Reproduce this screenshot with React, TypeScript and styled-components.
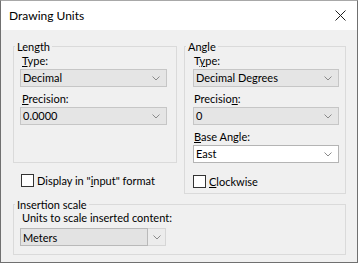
import React from "react";
import styled, { createGlobalStyle } from "styled-components";

const GlobalStyle = createGlobalStyle`
  html, body {
    margin: 0;
    padding: 0;
    background: #ffffff;
  }
  * { box-sizing: border-box; }
`;

const Window = styled.div`
  width: 358px;
  height: 263px;
  border: 1px solid #707070;
  border-top-color: #a8a8a8;
  background: #f0f0f0;
  display: flex;
  flex-direction: column;
  font-family: Lato, "Noto Sans", sans-serif;
  font-size: 11px;
  color: #000;
  overflow: hidden;
`;

const TitleBar = styled.div`
  height: 29px;
  flex: none;
  background: #ffffff;
  display: flex;
  align-items: center;
  justify-content: space-between;
  padding: 0 11px 0 8px;
`;

const Title = styled.span`
  font-size: 12px;
  line-height: 16px;
`;

const Body = styled.div`
  flex: 1;
  padding: 10px 11px 0 12px;
  display: grid;
  grid-template-columns: 164px 162px;
  column-gap: 7px;
  row-gap: 4px;
  align-content: start;
  align-items: start;
`;

const Column = styled.div`
  display: flex;
  flex-direction: column;
`;

const Group = styled.fieldset<{ $span?: boolean }>`
  margin: 0;
  padding: 0;
  min-width: 0;
  border: 1px solid #dadada;
  border-radius: 0;
  ${(p) => (p.$span ? "grid-column: 1 / -1;" : "")}
`;

const Legend = styled.legend`
  margin-left: 1px;
  padding: 0 2px;
  line-height: 13px;
`;

const GroupContent = styled.div<{ $pad: string }>`
  display: flex;
  flex-direction: column;
  padding: ${(p) => p.$pad};
`;

const Label = styled.div<{ $indent?: number; $gap?: number }>`
  line-height: 13px;
  padding-left: ${(p) => p.$indent ?? 2}px;
  margin-bottom: ${(p) => p.$gap ?? 2}px;
  white-space: nowrap;
`;

const Field = styled.div`
  display: flex;
  flex-direction: column;
  & + & { margin-top: 5px; }
`;

const Combo = styled.div<{ $white?: boolean }>`
  height: 18px;
  display: flex;
  align-items: center;
  justify-content: space-between;
  padding: 0 6px 0 2px;
  border: 1px solid ${(p) => (p.$white ? "#b4b4b4" : "#c6c6c6")};
  background: ${(p) => (p.$white ? "#ffffff" : "#e5e5e5")};
  line-height: 14px;
`;

const SplitCombo = styled.div`
  height: 18px;
  display: flex;
`;

const SplitField = styled.div`
  flex: 1;
  display: flex;
  align-items: center;
  padding-left: 2px;
  border: 1px solid #b9b9b9;
  background: #e3e3e3;
`;

const SplitButton = styled.div`
  width: 18px;
  display: flex;
  align-items: center;
  justify-content: center;
  border: 1px solid #d6d6d6;
  border-left: none;
  background: #ececec;
`;

const CheckRow = styled.label<{ $mt: number; $ml: number }>`
  display: flex;
  align-items: center;
  gap: 3px;
  margin-top: ${(p) => p.$mt}px;
  margin-left: ${(p) => p.$ml}px;
  line-height: 13px;
  white-space: nowrap;
`;

const Box = styled.span`
  width: 13px;
  height: 13px;
  flex: none;
  border: 1px solid #333333;
  background: #ffffff;
`;

const Chevron = () => (
  <svg width="8" height="5" viewBox="0 0 8 5">
    <path d="M0.5 0.5 L4 4 L7.5 0.5" fill="none" stroke="#8a8a8a" strokeWidth="1" />
  </svg>
);

const CloseIcon = () => (
  <svg width="11" height="11" viewBox="0 0 11 11">
    <path d="M0.5 0.5 L10.5 10.5 M10.5 0.5 L0.5 10.5" fill="none" stroke="#1e1e1e" strokeWidth="1" />
  </svg>
);

export default function App() {
  return (
    <>
      <GlobalStyle />
      <Window>
        <TitleBar>
          <Title>Drawing Units</Title>
          <CloseIcon />
        </TitleBar>
        <Body>
          <Column>
            <Group>
              <Legend>Length</Legend>
              <GroupContent $pad="1px 9px 37px 6px">
                <Field>
                  <Label><u>T</u>ype:</Label>
                  <Combo>
                    <span>Decimal</span>
                    <Chevron />
                  </Combo>
                </Field>
                <Field>
                  <Label><u>P</u>recision:</Label>
                  <Combo>
                    <span>0.0000</span>
                    <Chevron />
                  </Combo>
                </Field>
              </GroupContent>
            </Group>
            <CheckRow $mt={11} $ml={8}>
              <Box />
              <span>Display in "<u>i</u>nput" format</span>
            </CheckRow>
          </Column>
          <Group>
            <Legend>Angle</Legend>
            <GroupContent $pad="1px 6px 5px 8px">
              <Field>
                <Label $indent={1}>T<u>y</u>pe:</Label>
                <Combo>
                  <span>Decimal Degrees</span>
                  <Chevron />
                </Combo>
              </Field>
              <Field>
                <Label $indent={1}>Precisio<u>n</u>:</Label>
                <Combo>
                  <span>0</span>
                  <Chevron />
                </Combo>
              </Field>
              <Field>
                <Label $indent={1}><u>B</u>ase Angle:</Label>
                <Combo $white>
                  <span>East</span>
                  <Chevron />
                </Combo>
              </Field>
              <CheckRow $mt={12} $ml={0}>
                <Box />
                <span><u>C</u>lockwise</span>
              </CheckRow>
            </GroupContent>
          </Group>
          <Group $span>
            <Legend>Insertion scale</Legend>
            <GroupContent $pad="0 179px 8px 6px">
              <Label $indent={2} $gap={4}>Units to scale inserted content:</Label>
              <SplitCombo>
                <SplitField>Meters</SplitField>
                <SplitButton>
                  <Chevron />
                </SplitButton>
              </SplitCombo>
            </GroupContent>
          </Group>
        </Body>
      </Window>
    </>
  );
}
